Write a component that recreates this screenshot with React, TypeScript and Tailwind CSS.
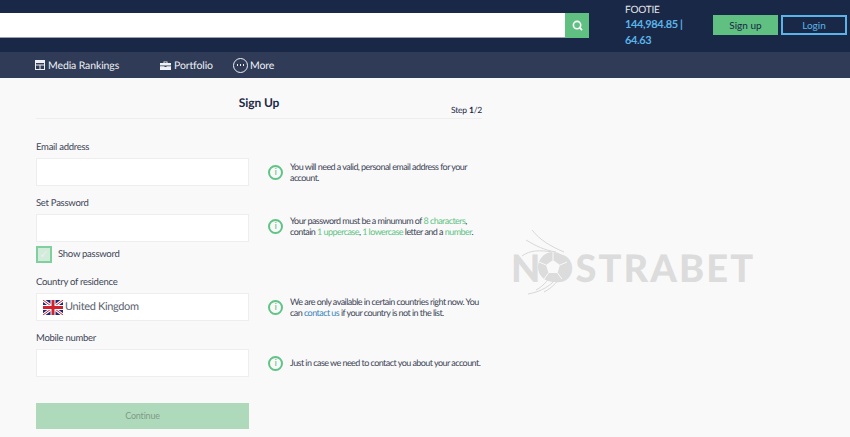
import { Search } from "lucide-react";
import type { ReactNode } from "react";

function InfoIcon() {
  return (
    <span className="flex h-[15px] w-[15px] shrink-0 items-center justify-center rounded-full border-2 border-[#62c386] text-[10px] leading-none text-[#62c386]">
      i
    </span>
  );
}

function Hint({ children, raised }: { children: ReactNode; raised?: boolean }) {
  return (
    <div
      className={`flex items-center gap-[7px] text-[9px] leading-[11.5px] tracking-[-0.55px] text-[#3d4557] ${raised ? "mb-[4px]" : ""}`}
    >
      <InfoIcon />
      <p className="w-[193px]">{children}</p>
    </div>
  );
}

function Flag() {
  return (
    <svg width="20" height="15" viewBox="0 0 60 45" className="shrink-0">
      <rect width="60" height="45" fill="#1a2a78" />
      <path d="M0 0 60 45M60 0 0 45" stroke="#fff" strokeWidth="9" />
      <path d="M0 0 60 45M60 0 0 45" stroke="#d3202f" strokeWidth="3" />
      <path d="M30 0V45M0 22.5H60" stroke="#fff" strokeWidth="15" />
      <path d="M30 0V45M0 22.5H60" stroke="#d3202f" strokeWidth="9" />
    </svg>
  );
}

function Field({ children }: { children?: ReactNode }) {
  return (
    <div className="flex h-[28px] w-[213px] shrink-0 items-center border border-[#eeeeee] bg-white px-[6px]">
      {children}
    </div>
  );
}

function Ball() {
  return (
    <svg
      width="66"
      height="66"
      viewBox="0 0 66 66"
      fill="none"
      stroke="#d8d8d8"
      strokeWidth="1"
      className="absolute left-[9px] top-[-18px]"
    >
      <path d="M12 0C20 10 30 16 44 22M6 10C16 16 24 20 36 22M2 26C10 20 20 20 32 22M16 60C24 56 30 48 34 40M8 64C20 62 32 56 40 44M24 62C32 58 40 50 44 40" />
      <circle cx="33" cy="37" r="15" fill="#dcdcdc" stroke="none" />
      <path d="M33 30 40 35 37.5 43H28.5L26 35Z" fill="#f9f9f9" stroke="none" />
      <path d="M33 30V22M40 35 47 32M37.5 43 42 49M28.5 43 24 49M26 35 19 32" stroke="#f9f9f9" />
    </svg>
  );
}

export default function App() {
  return (
    <div className="h-[437px] w-[850px] overflow-hidden bg-[#f9f9f9] font-['Lato',sans-serif] [text-rendering:geometricPrecision]">
      <header className="flex h-[52px] items-start bg-[#1a2847]">
        <div className="mt-[13px] flex h-[25px] w-[589px] shrink-0">
          <div className="flex-1 border-b border-[#9aa0ad] bg-white" />
          <button className="flex w-[24px] items-center justify-center bg-[#5fc082] text-white">
            <Search size={11} strokeWidth={3.5} />
          </button>
        </div>
        <div className="ml-[36px] w-[80px] pt-[4px]">
          <p className="text-[10px] leading-[12px] tracking-[-0.2px] text-[#e4e6ea]">FOOTIE</p>
          <p className="mt-[1px] w-[70px] text-[11px] leading-[16px] font-bold tracking-[-0.35px] text-[#5ab4e8]">
            144,984.85 | 64.63
          </p>
        </div>
        <div className="ml-[8px] mt-[15px] flex gap-[3px]">
          <button className="h-[20px] w-[65px] bg-[#5fc082] text-[10px] text-[#1a2847]">
            Sign up
          </button>
          <button className="h-[20px] w-[66px] border-2 border-[#5ab4e8] text-[10px] text-[#5ab4e8]">
            Login
          </button>
        </div>
      </header>

      <nav className="flex h-[26px] items-center bg-[#2f3b57] pl-[35px] text-[10.5px] tracking-[-0.12px] text-[#eef0f3]">
        <div className="flex w-[125px] items-center gap-[3px]">
          <svg width="10" height="10" viewBox="0 0 10 10" className="shrink-0">
            <path d="M0 0H10V10H0ZM1 3V4.5H9V3ZM1 5.5V9H4.5V5.5ZM5.5 5.5V9H9V5.5Z" fill="#eef0f3" fillRule="evenodd" />
          </svg>
          <span className="pt-[3px]">Media Rankings</span>
        </div>
        <div className="flex w-[73px] items-center gap-[3px]">
          <svg width="11" height="9" viewBox="0 0 11 9" className="shrink-0">
            <path d="M3.5 2V.5H7.5V2H11V4.5H0V2ZM4.5 2H6.5V1.2H4.5ZM0 5.2H4.5V6H6.5V5.2H11V9H0Z" fill="#eef0f3" />
          </svg>
          <span className="pt-[3px]">Portfolio</span>
        </div>
        <div className="flex items-center gap-[2px]">
          <span className="flex h-[15px] w-[15px] items-center justify-center gap-[1.5px] rounded-full border border-[#eef0f3]">
            <span className="h-[1.5px] w-[1.5px] bg-[#eef0f3]" />
            <span className="h-[1.5px] w-[1.5px] bg-[#eef0f3]" />
            <span className="h-[1.5px] w-[1.5px] bg-[#eef0f3]" />
          </span>
          <span className="pt-[3px]">More</span>
        </div>
      </nav>

      <main className="flex pl-[36px]">
        <section className="w-[446px] shrink-0">
          <div className="relative flex h-[41px] items-end justify-center border-b border-[#eeeeee] pb-[7px]">
            <h1 className="text-[12px] leading-[16px] font-bold tracking-[-0.1px] text-[#1a2847]">Sign Up</h1>
            <span className="absolute right-0 bottom-[2px] text-[8.5px] leading-[12px] tracking-[-0.2px] text-[#1a2847]">
              Step <b>1</b>/2
            </span>
          </div>

          <div className="mt-[22px] flex flex-col text-[9.5px] leading-[12px] tracking-[-0.27px] text-[#3d4557]">
            <label className="h-[12px] pt-[1px]">Email address</label>
            <div className="mt-[5px] flex h-[28px] items-center gap-[19px]">
              <Field />
              <Hint>You will need a valid, personal email address for your account.</Hint>
            </div>

            <label className="mt-[11px] h-[12px] pt-[1px]">Set Password</label>
            <div className="mt-[5px] flex h-[28px] items-center gap-[19px]">
              <Field />
              <Hint raised>
                Your password must be a minumum of <span className="text-[#62c386]">8 characters</span>, contain{" "}
                <span className="text-[#62c386]">1 uppercase</span>, <span className="text-[#62c386]">1 lowercase</span>{" "}
                letter and a <span className="text-[#62c386]">number</span>.
              </Hint>
            </div>
            <div className="mt-[4px] flex h-[17px] items-center gap-[6px]">
              <span className="flex h-[17px] w-[16px] items-center justify-center border-2 border-[#7fd09c] bg-[#d3ebdb] text-[11px] text-[#e6f3ea]">
                ✓
              </span>
              Show password
            </div>

            <label className="mt-[13px] h-[12px] pt-[1px]">Country of residence</label>
            <div className="mt-[5px] flex h-[28px] items-center gap-[19px]">
              <Field>
                <Flag />
                <span className="ml-[2px] text-[11px] tracking-[-0.35px] text-[#5c6370]">United Kingdom</span>
              </Field>
              <Hint>
                We are only available in certain countries right now. You can{" "}
                <span className="text-[#3a85bd]">contact us</span> if your country is not in the list.
              </Hint>
            </div>

            <label className="mt-[11px] h-[12px] pt-[1px]">Mobile number</label>
            <div className="mt-[5px] flex h-[28px] items-center gap-[19px]">
              <Field />
              <Hint>Just in case we need to contact you about your account.</Hint>
            </div>

            <button className="mt-[26px] h-[26px] w-[213px] bg-[#aedabb] text-[9px] tracking-[-0.2px] text-[#7f9a88]">Continue</button>
          </div>
        </section>

        <div className="relative ml-[29px] mt-[170px] h-[40px] self-start text-[38px] leading-[40px] font-black tracking-[2.1px] text-[#dcdcdc]">
          <span>NOSTRABET</span>
          <Ball />
        </div>
      </main>
    </div>
  );
}
